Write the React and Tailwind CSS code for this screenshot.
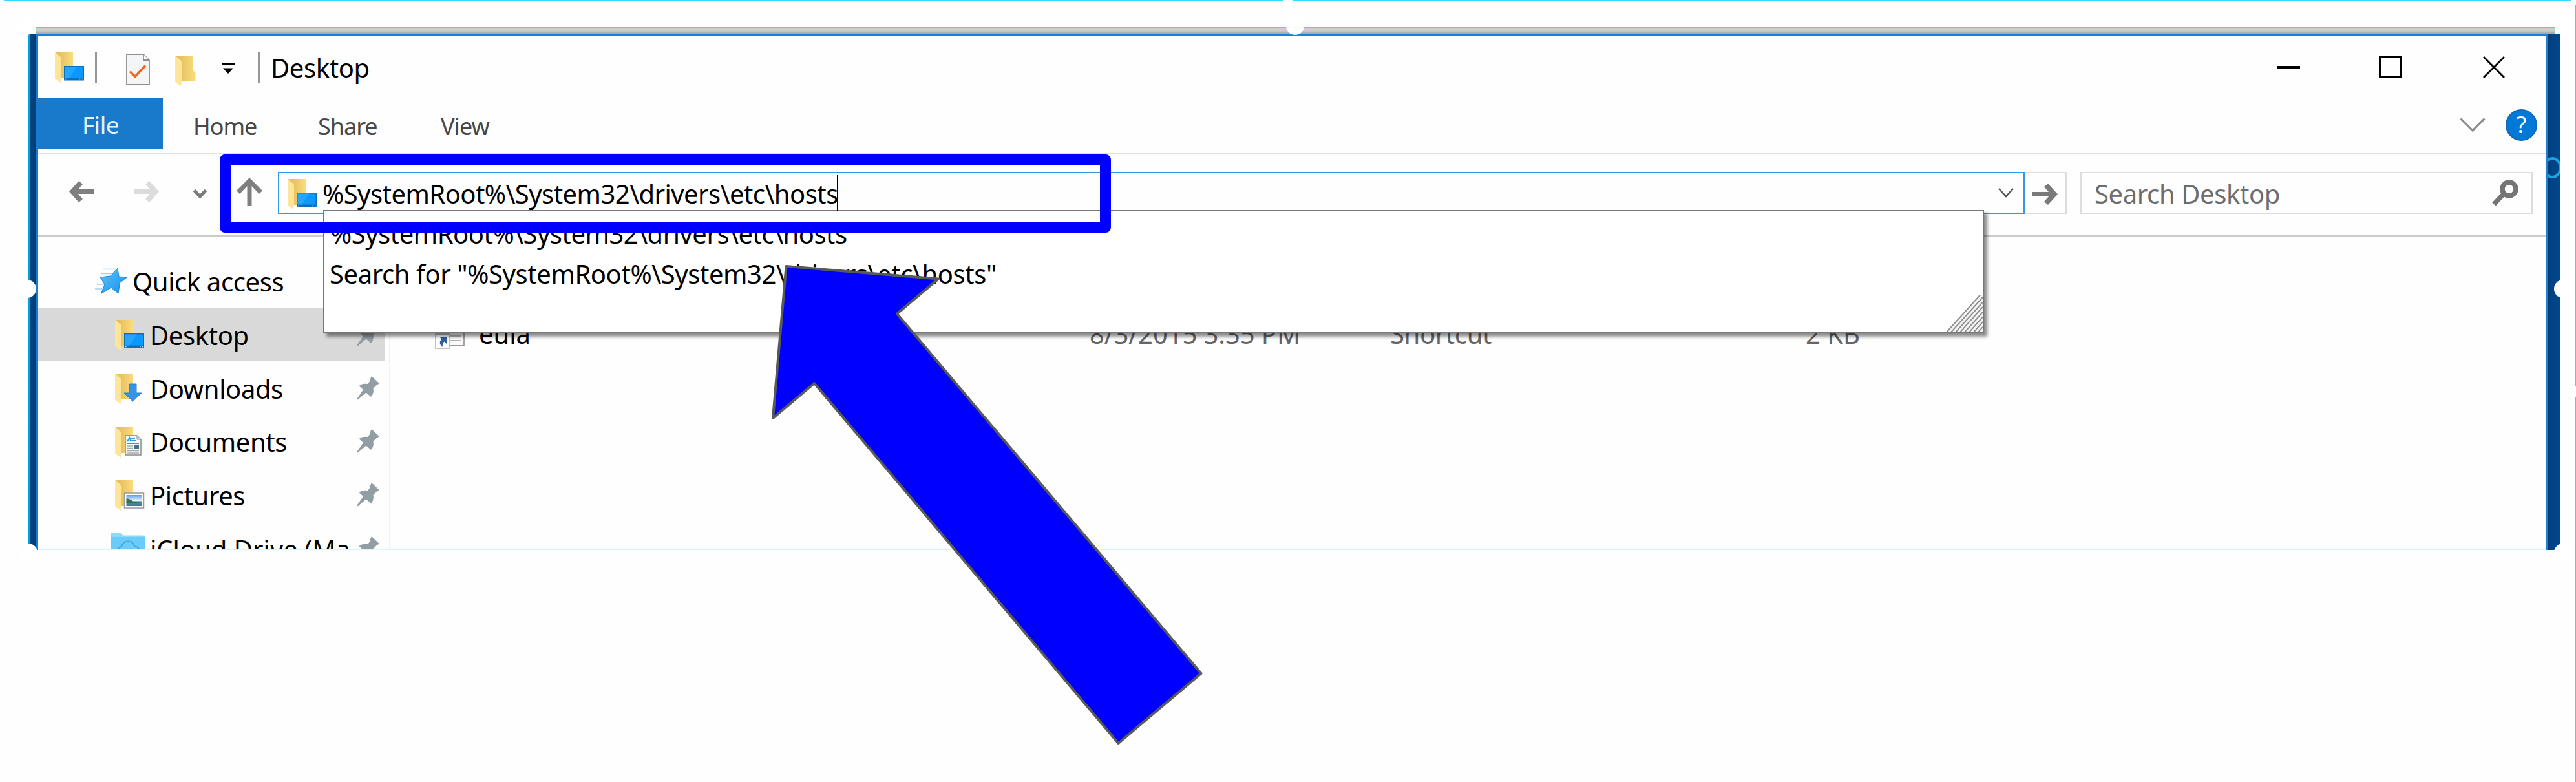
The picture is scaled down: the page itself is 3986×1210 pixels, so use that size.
function T({ className = "", children }) {
  return <span className={`shrink-0 pt-[3px] whitespace-pre ${className}`}>{children}</span>;
}

function Gradients() {
  return (
    <svg className="absolute size-0" aria-hidden="true">
      <defs>
        <linearGradient id="folderBack" x1="0" x2="1">
          <stop offset="0.25" stopColor="#e6c160" />
          <stop offset="1" stopColor="#fbdc7c" />
        </linearGradient>
        <linearGradient id="photo" x1="0" y1="0" x2="0" y2="1">
          <stop offset="0" stopColor="#5b9bf0" />
          <stop offset="0.5" stopColor="#e6f3fb" />
          <stop offset="0.6" stopColor="#4d8f86" />
          <stop offset="1" stopColor="#3a78b4" />
        </linearGradient>
        <linearGradient id="star" x1="0" x2="1" y2="1">
          <stop offset="0" stopColor="#5cc3fb" />
          <stop offset="1" stopColor="#1590ee" />
        </linearGradient>
      </defs>
    </svg>
  );
}

function Folder({ kind, className = "" }) {
  return (
    <svg viewBox="0 0 46 48" className={`h-12 w-[46px] shrink-0 ${className}`}>
      <path d={kind ? "M1 0H28V40H1Z" : "M1 0H28V23L31.500 27V40H1Z"} fill="url(#folderBack)" />
      <path d="M0 0L8 6.500Q10 8 10 11V38L9 47L1.500 42Q0 41 0 39Z" fill="#ffe597" />
      {kind === "desktop" && (
        <>
          <rect x="14" y="21" width="31" height="22.500" fill="#0d6fb8" />
          <rect x="15.500" y="22.500" width="28" height="17" fill="#0b98ff" />
          <path d="M15.500 39.500V22.500H34L22 39.500Z" fill="#25a5ff" />
          <path d="M16 41.500h1.500M38 41.500h1.500M42 41.500h1.500" stroke="#cfe9fa" strokeWidth="1.500" />
        </>
      )}
      {kind === "downloads" && (
        <path d="M22.500 16H33V30H41L27.500 43L14 30H22.500Z" fill="#3594e8" stroke="#2b80cf" />
      )}
      {kind === "documents" && (
        <>
          <path d="M16 13H34L40 19V43H16Z" fill="#f8f8f8" stroke="#8a8a8a" strokeWidth="1.500" />
          <path d="M34 13V19H40" fill="#ddd" stroke="#8a8a8a" />
          <path d="M19 22L22.500 16L24 22M25 18H31M25 21H33M18.500 25H37" fill="none" stroke="#2a9ee0" strokeWidth="1.800" />
          <path d="M19 29H28M19 32.500H28M19 36.500H37M19 40H37" stroke="#aaa" strokeWidth="1.300" />
          <rect x="29.500" y="28" width="7.500" height="6" fill="#3c7391" />
        </>
      )}
      {kind === "pictures" && (
        <>
          <rect x="14.500" y="20" width="30" height="23" fill="#fff" stroke="#999" strokeWidth="1.500" />
          <rect x="17.500" y="23" width="24" height="17" fill="url(#photo)" />
          <path d="M17.500 28Q24 29 28 33L38 35L17.500 36Z" fill="#3c6e4e" />
        </>
      )}
    </svg>
  );
}

function Pin() {
  return (
    <svg viewBox="0 0 36 37" className="h-[37px] w-9 shrink-0">
      <path d="M23 0L35 11.500L31 13.500L25.500 19Q27 27 22 32L14.500 25.500L1.500 36.500L0 35.500L10 21L3.500 15Q9 10.500 17 12Q21 8 21 4Z" fill="#929da4" />
    </svg>
  );
}

function Star() {
  return (
    <svg viewBox="0 0 50 41" className="h-[41px] w-[50px] shrink-0">
      <path d="M13 2.500H32M9 9.500H28M3 26H15M0 33H12" stroke="#9fd4f7" strokeWidth="1.500" />
      <path d="M35 1L37 14L49.500 15L38.500 23.500L36 40L25 31L9.500 40.500L15 26L8 15L24 13Z" fill="url(#star)" stroke="#1c86d6" />
    </svg>
  );
}

function CloudFolder() {
  return (
    <svg viewBox="0 0 53 48" className="h-12 w-[53px] shrink-0">
      <path d="M0 2Q0 0 2 0H16L19 4.500H51Q53 5 53 7V48H0Z" fill="#8ed8fb" />
      <path d="M0 7H53V48H0Z" fill="#6bcbf9" />
      <path d="M9 30Q11 23 17 22Q19 13.500 27 13.500Q35 13.500 37 21Q44 22 46 30" fill="none" stroke="#45a8dd" strokeWidth="1.800" />
    </svg>
  );
}

function Arrow({ className = "" }) {
  return (
    <svg viewBox="0 0 39 33" className={`h-[33px] w-[39px] shrink-0 ${className}`}>
      <path d="M39 16.500L24 0L18 5L25 13H0V20H25L18 28L24 33Z" fill="currentColor" />
    </svg>
  );
}

function Separator({ className = "" }) {
  return <div className={`h-12 w-[3px] shrink-0 bg-[#979797] ${className}`} />;
}

function TitleBar() {
  return (
    <header className="flex h-[97px] shrink-0 items-center pr-16 pl-[26px]">
      <Folder kind="desktop" className="mt-0.5" />
      <Separator className="mt-0.5 ml-4" />
      <svg viewBox="0 0 37 49" className="mt-[7px] ml-[45px] h-[49px] w-[37px] shrink-0">
        <path d="M1 1H27L36 10V48H1Z" fill="#f4f5f7" stroke="#8f8f8f" strokeWidth="1.800" />
        <path d="M27 1V10H36" fill="#fff" stroke="#8f8f8f" strokeWidth="1.800" />
        <path d="M6 27.500L14 35.500L30 18.500" fill="none" stroke="#f7631b" strokeWidth="3.500" />
      </svg>
      <Folder className="mt-3 -mr-3.5 ml-[39px]" />
      <svg viewBox="0 0 20 17" className="mt-1 ml-10 h-[17px] w-5 shrink-0">
        <path d="M0 0.500H20V3H0ZM2 8.500H18L10 17Z" fill="#000" />
      </svg>
      <Separator className="mt-0.5 ml-9" />
      <T className="ml-[17px]">Desktop</T>
      <div className="ml-auto flex items-center">
        <div className="h-1 w-[35px] bg-black" />
        <div className="ml-[122px] size-[35px] border-[3px] border-black" />
        <svg viewBox="0 0 34 34" className="ml-[126px] size-[34px]">
          <path d="M1 1L33 33M33 1L1 33" stroke="#000" strokeWidth="2.800" />
        </svg>
      </div>
    </header>
  );
}

function Ribbon() {
  return (
    <nav className="flex h-[86px] shrink-0 border-b-2 border-[#e0e0e0] text-[36px] tracking-[-1px] text-[#474747]">
      <div className="flex h-[79px] w-[193px] items-center justify-center bg-[#1979ca] pt-0.5 text-[37px] tracking-[-0.5px] text-[#e8f2fb]">
        File
      </div>
      <div className="ml-[47px] flex h-[84px] items-center">
        <T className="w-[193px]">Home</T>
        <T className="w-[190px]">Share</T>
        <T>View</T>
      </div>
      <div className="ml-auto flex h-[82px] items-center pr-3.5">
        <svg viewBox="0 0 40 22" className="h-[22px] w-10">
          <path d="M1.500 1.500L20 20L38.500 1.500" fill="none" stroke="#8c8c8c" strokeWidth="3.200" />
        </svg>
        <div className="ml-[31px] flex size-[49px] items-center justify-center rounded-full border-2 border-[#0f69b8] bg-[#0078d7] text-[36px] tracking-normal text-white">
          ?
        </div>
      </div>
    </nav>
  );
}

function Suggestions() {
  return (
    <div className="absolute top-[57px] left-[68px] z-20 h-[191px] w-[2570px] border-2 border-[#777] bg-white pt-0.5 text-black shadow-[5px_5px_5px_rgba(0,0,0,0.45)]">
      <div className="flex h-[62px] items-center pl-[9px] tracking-[-0.5px]">
        <T>{"%SystemRoot%\\System32\\drivers\\etc\\hosts"}</T>
      </div>
      <div className="flex h-[62px] items-center pl-2 tracking-[-0.42px]">
        <T>{'Search for "%SystemRoot%\\System32\\drivers\\etc\\hosts"'}</T>
      </div>
      <svg viewBox="0 0 57 57" className="absolute right-0 bottom-0 size-[57px]">
        <path d="M0 57L57 -6V57Z" fill="#f4f4f4" />
        <path
          d="M1 57L57 -5M8 57L57 3M15 57L57 10.500M22 57L57 18M29 57L57 26M36 57L57 33.500M43 57L57 41M50 57L57 49"
          stroke="#8f8f8f"
          strokeWidth="2"
        />
      </svg>
    </div>
  );
}

function NavigationRow() {
  return (
    <div className="flex h-[128px] shrink-0 items-center border-b-2 border-[#cbcbcb] pr-[21px] pb-[5px] pl-12">
      <Arrow className="mb-1 rotate-180 text-[#7f7f7f]" />
      <Arrow className="mb-1 ml-[61px] text-[#dcdcdc]" />
      <svg viewBox="0 0 21 14" className="mt-0.5 ml-[53px] h-3.5 w-[21px] shrink-0">
        <path d="M1.500 1.500L10.500 11L19.500 1.500" fill="none" stroke="#7a7a7a" strokeWidth="5" />
      </svg>
      <svg viewBox="0 0 40 43" className="mb-1 ml-[46px] h-[43px] w-10 shrink-0">
        <path d="M20 0L40 20L35 25L23.500 13V43H16.500V13L5 25L0 20Z" fill="#7f7f7f" />
      </svg>
      <div className="relative ml-6 flex h-[65px] w-[2703px] shrink-0 items-center border-2 border-[#3497e4] pr-[15px] pl-[13px]">
        <Folder kind="desktop" className="mt-1" />
        <T className="ml-2 tracking-[-0.55px]">{"%SystemRoot%\\System32\\drivers\\etc\\hosts"}</T>
        <div className="z-30 -ml-0.5 h-[55px] w-0.5 bg-black" />
        <svg viewBox="0 0 24 15" className="ml-auto h-[15px] w-6">
          <path d="M1 1L12 13L23 1" fill="none" stroke="#4f4f4f" strokeWidth="2.500" />
        </svg>
        <Suggestions />
      </div>
      <div className="flex h-[65px] w-[65px] shrink-0 items-center justify-center border-2 border-l-0 border-[#ddd] pt-1">
        <Arrow className="text-[#7a7a7a]" />
      </div>
      <div className="ml-auto flex h-[65px] w-[700px] shrink-0 items-center justify-between border-2 border-[#ddd] pr-5 pl-5 text-[#6d6d6d]">
        <T>Search Desktop</T>
        <svg viewBox="0 0 41 41" className="size-[41px]">
          <circle cx="26.500" cy="14.500" r="10.500" fill="none" stroke="#757575" strokeWidth="7.500" />
          <path d="M19 21L3 38" stroke="#757575" strokeWidth="7.500" />
        </svg>
      </div>
    </div>
  );
}

const places = [
  ["desktop", "Desktop"],
  ["downloads", "Downloads"],
  ["documents", "Documents"],
  ["pictures", "Pictures"],
];

function Sidebar() {
  return (
    <aside className="w-[545px] shrink-0 border-r-2 border-[#f1f1f1] pt-[27px]">
      <div className="flex h-[83px] items-center gap-2 pl-[88px]">
        <Star />
        <T>Quick access</T>
      </div>
      {places.map(([kind, label]) => (
        <div
          key={kind}
          className={`flex h-[82.7px] w-[537px] items-center pr-2 pl-[119px] ${kind === "desktop" ? "bg-[#d9d9d9]" : ""}`}
        >
          <Folder kind={kind} className="mt-1" />
          <T className="mr-auto ml-2">{label}</T>
          <Pin />
        </div>
      ))}
      <div className="flex h-[82.7px] w-[537px] items-center pr-2 pl-28">
        <CloudFolder />
        <T className="mr-auto ml-2 tracking-normal">iCloud Drive (Ma</T>
        <Pin />
      </div>
    </aside>
  );
}

function FileList() {
  return (
    <main className="flex-1 pt-[108px]">
      <div className="flex h-[83px] items-center pl-[69px] text-[#666]">
        <svg viewBox="0 0 46 48" className="h-12 w-[46px] shrink-0">
          <path d="M10 1H45V43H10Z" fill="#fafafa" stroke="#9a9a9a" strokeWidth="1.800" />
          <path d="M15 14H41M15 21H41M22 28H41M22 35H41" stroke="#b5b5b5" strokeWidth="1.800" />
          <rect x="1" y="25" width="21" height="22" fill="#fff" stroke="#bbb" strokeWidth="1.800" />
          <path d="M7 29H18V40L14.500 36.500Q11 39 12 45Q4 39 10.500 32.500Z" fill="#2f5f9e" />
        </svg>
        <T className="ml-[22px] w-[945px] tracking-normal text-black">eula</T>
        <T className="w-[465px] tracking-[-0.1px]">8/3/2015 3:35 PM</T>
        <T className="w-[643px]">Shortcut</T>
        <T className="tracking-normal">2 KB</T>
      </div>
    </main>
  );
}

function ExplorerWindow() {
  return (
    <section className="relative flex flex-1 flex-col border-t-[3px] border-[#1b80d8] bg-[#fefefe]">
      <TitleBar />
      <Ribbon />
      <NavigationRow />
      <div className="flex min-h-0 flex-1 overflow-hidden border-b border-[#d9f5fb]">
        <Sidebar />
        <FileList />
      </div>
    </section>
  );
}

function Handle({ className }) {
  return <div className={`absolute size-7 rounded-full bg-white ${className}`} />;
}

export default function App() {
  return (
    <div className="relative h-[1210px] w-[3986px] overflow-hidden bg-[#fefefe] font-['Noto_Sans','Open_Sans',sans-serif] text-[40px] leading-[54px] tracking-[-0.4px] text-black">
      <Gradients />
      <div className="absolute top-0 left-1.5 h-0.5 w-[1979px] bg-[#30dcff]" />
      <div className="absolute top-0 left-[2000px] h-0.5 w-[1979px] bg-[#30dcff]" />
      <div className="absolute top-[7px] right-0 h-[591px] w-px bg-[#44d0ee]" />
      <div className="absolute top-[614px] right-0 h-[596px] w-px bg-[#44d0ee]" />

      <div className="mt-[42px] ml-[44px] flex h-[809px] w-[3918px] flex-col overflow-hidden">
        <div className="flex h-2.5 shrink-0 pr-[9px] pl-[11px]">
          <div className="flex-1 border-t border-[#4fd0e4] bg-linear-to-b from-[#d3d0d0] via-[#cbcbcb] to-[#a5a5a5]" />
        </div>
        <div className="flex min-h-0 flex-1">
          <div className="w-[11px] border-l-2 border-[#00a4dc] bg-linear-to-r from-[#004a8a] to-[#003c74]" />
          <div className="w-1 bg-[#1b7ad2]" />
          <ExplorerWindow />
          <div className="w-[3px] bg-[#1b80d8]" />
          <div className="relative w-[19px] overflow-hidden bg-linear-to-r from-[#003d75] via-[#004488] via-40% to-[#00478b]">
            <div className="absolute top-[191px] -left-[7px] h-[33px] w-[27px] rounded-full border-[4px] border-[#1ea3dc]" />
          </div>
        </div>
      </div>

      <Handle className="top-[26px] left-[1990px]" />
      <Handle className="top-[433px] left-[28px]" />
      <Handle className="top-[433px] left-[3952px]" />
      <Handle className="top-[26px] left-[27px]" />
      <Handle className="top-[26px] left-[3953px]" />
      <Handle className="top-[841px] left-[30px]" />
      <Handle className="top-[841px] left-[3952px]" />

      <div className="absolute top-[239px] left-[340px] z-40 h-[121px] w-[1379px] rounded-lg border-[17px] border-[#0000ff]" />
      <svg viewBox="1180 400 700 770" className="absolute top-[400px] left-[1180px] z-40 h-[770px] w-[700px]">
        <path
          d="M1216.500 412L1452 431.500L1388 485.500L1858.500 1042L1730.500 1150L1260 593L1196 647Z"
          fill="#0000ff"
          stroke="#595959"
          strokeWidth="4"
          strokeLinejoin="round"
        />
      </svg>
    </div>
  );
}
